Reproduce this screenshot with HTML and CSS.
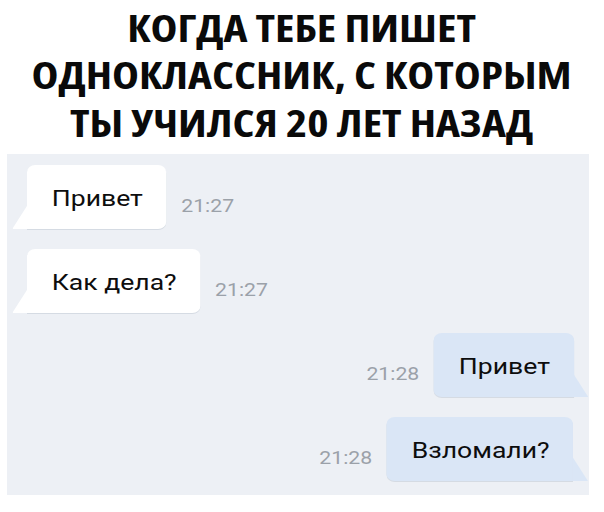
FILE: index.html
```html
<!DOCTYPE html>
<html lang="ru">
<head>
<meta charset="utf-8">
<link rel="stylesheet" href="styles.css">
</head>
<body>
<h1 class="title">КОГДА ТЕБЕ ПИШЕТ<br>ОДНОКЛАССНИК, С КОТОРЫМ<br>ТЫ УЧИЛСЯ 20 ЛЕТ НАЗАД</h1>
<div class="chat">
  <div class="row in">
    <div class="bubble">Привет</div>
    <span class="time">21:27</span>
  </div>
  <div class="row in">
    <div class="bubble">Как дела?</div>
    <span class="time">21:27</span>
  </div>
  <div class="row out">
    <span class="time">21:28</span>
    <div class="bubble">Привет</div>
  </div>
  <div class="row out">
    <span class="time">21:28</span>
    <div class="bubble">Взломали?</div>
  </div>
</div>
</body>
</html>
```
FILE: styles.css
```css
html, body {
  margin: 0;
  padding: 0;
  background: #ffffff;
}
body {
  width: 604px;
  height: 512px;
  overflow: hidden;
}
/* the source screenshot is horizontally stretched */
.title {
  width: fit-content;
  margin: 0 auto;
  padding-top: 4px;
  font-family: "Open Sans", "Liberation Sans", sans-serif;
  font-weight: 700;
  font-stretch: 75%;
  font-size: 37px;
  line-height: 47.3px;
  letter-spacing: 0;
  text-align: center;
  color: #0a0a0a;
  transform: scaleX(1.23);
  transform-origin: center top;
}
.chat {
  margin: 8px 15px 0 7px;
  background: #edf0f5;
  height: 341px;
  box-sizing: border-box;
  padding: 11px 16px 0 20px;
  display: flex;
  flex-direction: column;
  gap: 20px;
  overflow: hidden;
}
.row {
  display: flex;
  align-items: flex-end;
  gap: 12.5px;
  transform: scaleX(1.18);
}
.row.in {
  align-self: flex-start;
  transform-origin: left center;
}
.row.out {
  align-self: flex-end;
  transform-origin: right center;
}
.bubble {
  position: relative;
  height: 64px;
  box-sizing: border-box;
  padding: 3px 20px 0 21px;
  display: flex;
  align-items: center;
  font-family: Roboto, "Noto Sans", sans-serif;
  font-size: 22.5px;
  color: #0d0d0d;
  border-radius: 7px;
  box-shadow: 0 1px 0 #d5dbe3;
}
.in .bubble {
  background: #ffffff;
  border-bottom-left-radius: 0;
}
.out .bubble {
  background: #dae6f6;
  border-bottom-right-radius: 0;
}
.bubble::before {
  content: "";
  position: absolute;
  bottom: 0;
  width: 13px;
  height: 24px;
  background: inherit;
}
.in .bubble::before {
  left: -12.5px;
  clip-path: polygon(100% 0, 100% 100%, 0 100%);
}
.out .bubble::before {
  right: -12.5px;
  clip-path: polygon(0 0, 100% 100%, 0 100%);
}
.time {
  font-family: Roboto, "Noto Sans", sans-serif;
  font-size: 18px;
  color: #9ba1a9;
  margin-bottom: 13px;
}
```
